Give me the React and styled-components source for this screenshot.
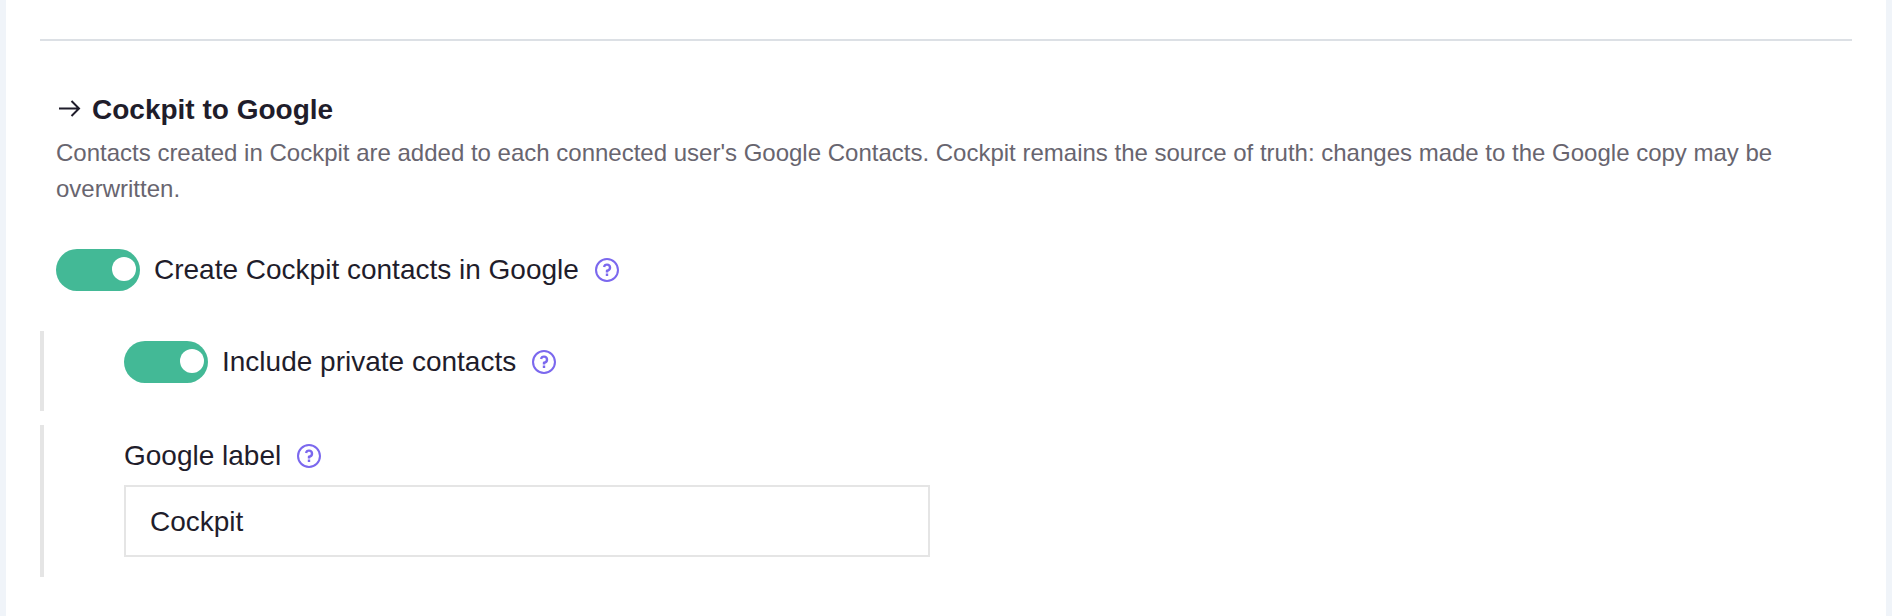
import React, { useState } from 'react'
import styled, { createGlobalStyle } from 'styled-components'

const GlobalStyle = createGlobalStyle`
    * {
        box-sizing: border-box;
    }

    body {
        margin: 0;
        background: #f0f4f9;
        color: #1f1d2b;
        font-family: "Liberation Sans", Arial, sans-serif;
        font-size: 28px;
        line-height: 36px;
    }
`

const Panel = styled.main`
    min-height: 100vh;
    margin: 0 6px;
    padding: 39px 34px;
    background: #fff;
`

const Divider = styled.hr`
    height: 2px;
    margin: 0 0 51px;
    border: 0;
    background: #dce0e5;
`

const Intro = styled.header`
    padding: 0 16px;
    margin-bottom: 42px;
`

const Title = styled.h2`
    display: flex;
    align-items: center;
    gap: 10px;
    margin: 0 0 7px;
    font-size: 28px;
    font-weight: 700;
`

const Description = styled.p`
    margin: 0;
    color: #68656f;
    font-size: 24px;
`

const Row = styled.div`
    display: flex;
    align-items: center;
    padding-left: ${props => props.$inset ? '16px' : '0'};
`

const Nested = styled.div`
    width: ${props => props.$half ? '50%' : 'auto'};
    margin-top: ${props => props.$first ? '40px' : '14px'};
    padding: ${props => props.$half ? '13px 16px 20px 80px' : '10px 16px 28px 80px'};
    border-left: 4px solid #e5e5e5;
`

const Switch = styled.input`
    appearance: none;
    flex: none;
    width: 84px;
    height: 42px;
    margin: 0 14px 0 0;
    padding: 8px 4px;
    border-radius: 21px;
    background: ${props => props.checked ? '#43b996' : '#c9ccd1'};
    cursor: pointer;

    &::before {
        content: "";
        display: block;
        width: 24px;
        height: 24px;
        margin-left: ${props => props.checked ? 'auto' : '0'};
        border-radius: 50%;
        background: #fff;
    }
`

const HelpButton = styled.button`
    display: flex;
    margin-left: 16px;
    padding: 0;
    border: 0;
    background: none;
    color: #7b68ee;
    cursor: pointer;
`

const TextInput = styled.input`
    display: block;
    width: 100%;
    height: 72px;
    margin-top: 11px;
    padding: 2px 24px 0;
    border: 2px solid #e5e5e5;
    background: #fff;
    color: inherit;
    font: inherit;
`

function ArrowIcon() {
    return (
        <svg width="26" height="26" viewBox="0 0 26 26" fill="none" stroke="currentColor" strokeWidth="2" aria-hidden="true">
            <path d="M3 11.5h20M15.5 4l7.5 7.5-7.5 7.5" />
        </svg>
    )
}

function Help({ label }) {
    return (
        <HelpButton type="button" aria-label={label}>
            <svg width="24" height="24" viewBox="2 2 20 20" fill="currentColor">
                <path d="M12 22C6.477 22 2 17.523 2 12S6.477 2 12 2s10 4.477 10 10-4.477 10-10 10zm0-1.7a8.3 8.3 0 1 0 0-16.6 8.3 8.3 0 0 0 0 16.6zm-1-5.3h2v2h-2v-2zm2-1.645V14h-2v-1.5a1 1 0 0 1 1-1 1.5 1.5 0 1 0-1.471-1.794l-1.962-.393A3.501 3.501 0 1 1 13 13.355z" />
            </svg>
        </HelpButton>
    )
}

function ToggleRow({ id, label, inset }) {
    const [on, setOn] = useState(true)

    return (
        <Row $inset={inset}>
            <Switch type="checkbox" role="switch" id={id} checked={on} onChange={e => setOn(e.target.checked)} />
            <label htmlFor={id}>{label}</label>
            <Help label={'About: ' + label} />
        </Row>
    )
}

function App() {
    const [googleLabel, setGoogleLabel] = useState('Cockpit')

    return (
        <>
            <GlobalStyle />
            <Panel>
                <Divider />
                <Intro>
                    <Title><ArrowIcon />Cockpit to Google</Title>
                    <Description>
                        Contacts created in Cockpit are added to each connected user's Google Contacts. Cockpit remains the source of truth: changes made to the Google copy may be overwritten.
                    </Description>
                </Intro>
                <ToggleRow id="create-contacts" label="Create Cockpit contacts in Google" inset />
                <Nested $first>
                    <ToggleRow id="private-contacts" label="Include private contacts" />
                </Nested>
                <Nested $half>
                    <Row>
                        <label htmlFor="google-label">Google label</label>
                        <Help label="About: Google label" />
                    </Row>
                    <TextInput id="google-label" type="text" value={googleLabel} onChange={e => setGoogleLabel(e.target.value)} />
                </Nested>
            </Panel>
        </>
    )
}

export default App
